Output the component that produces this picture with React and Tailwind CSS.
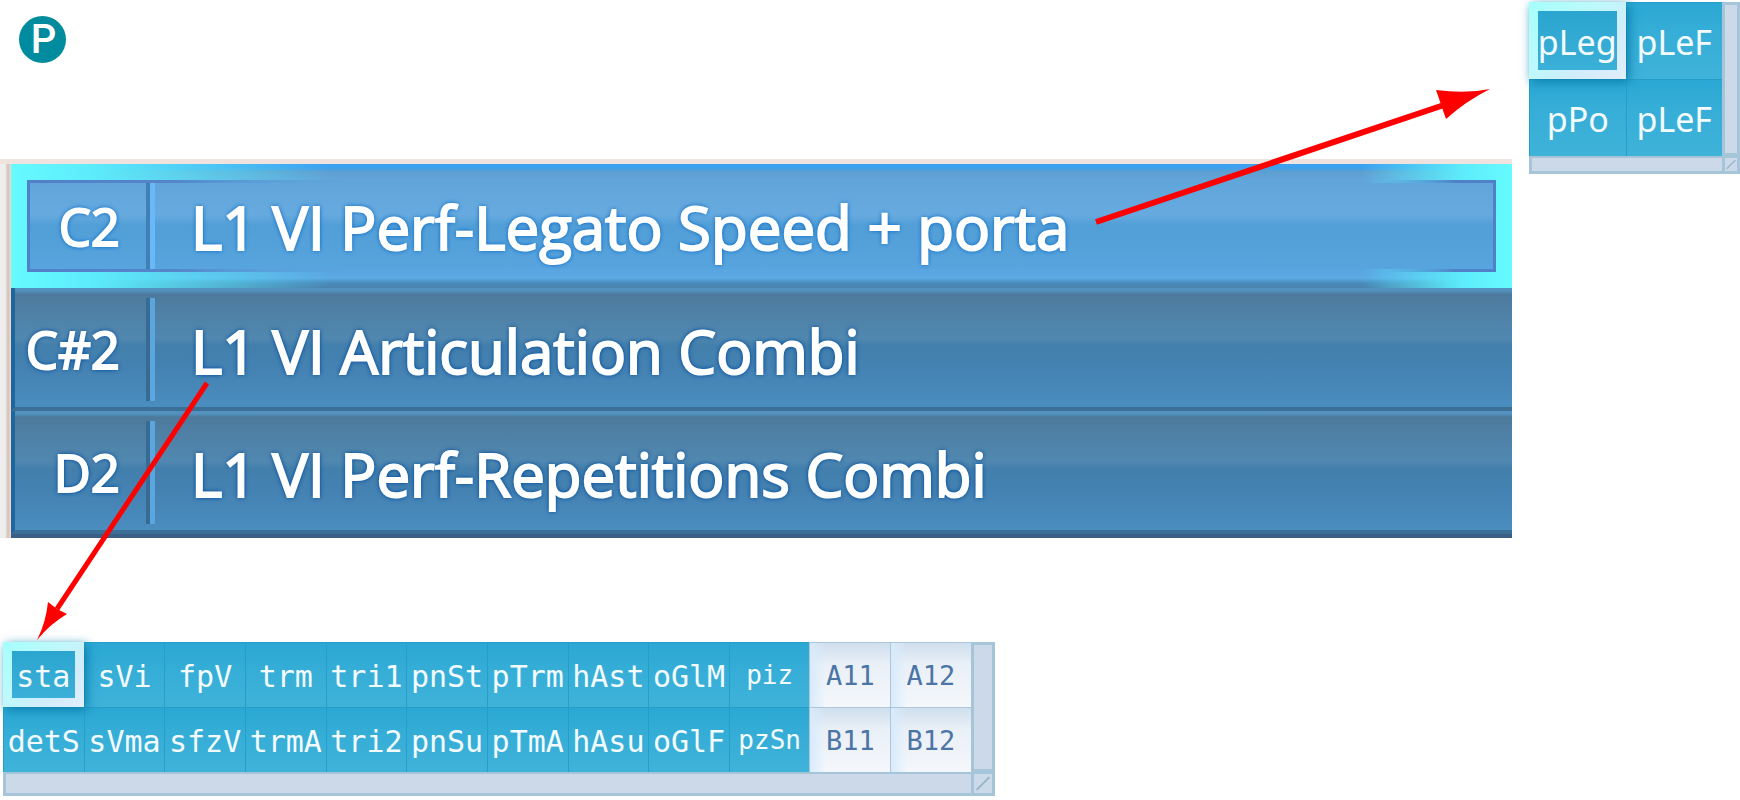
import React from 'react';
import clsx from 'clsx';

const patches = [
  { key: 'C2', name: 'L1 VI Perf-Legato Speed + porta', selected: true },
  { key: 'C#2', name: 'L1 VI Articulation Combi' },
  { key: 'D2', name: 'L1 VI Perf-Repetitions Combi' },
];

const legatoCells = [
  { label: 'pLeg', selected: true },
  { label: 'pLeF' },
  { label: 'pPo' },
  { label: 'pLeF' },
];

const combiCells = [
  { label: 'sta', selected: true },
  { label: 'sVi' },
  { label: 'fpV' },
  { label: 'trm' },
  { label: 'tri1' },
  { label: 'pnSt' },
  { label: 'pTrm' },
  { label: 'hAst' },
  { label: 'oGlM' },
  { label: 'piz', small: true },
  { label: 'A11', empty: true },
  { label: 'A12', empty: true },
  { label: 'detS' },
  { label: 'sVma' },
  { label: 'sfzV' },
  { label: 'trmA' },
  { label: 'tri2' },
  { label: 'pnSu' },
  { label: 'pTmA' },
  { label: 'hAsu' },
  { label: 'oGlF' },
  { label: 'pzSn', small: true },
  { label: 'B11', empty: true },
  { label: 'B12', empty: true },
];

const Logo = () => (
  <div className="flex size-[47px] items-center justify-center rounded-full bg-[#008c9e] pl-0.5 font-['Roboto',sans-serif] text-[40px] leading-none font-medium text-white">
    P
  </div>
);

const PatchRow = ({ patch }) => (
  <button
    type="button"
    className={clsx(
      'block w-full text-left text-white [-webkit-text-stroke:2px_#fff]',
      patch.selected
        ? 'bg-[linear-gradient(90deg,#66fbff_0,#5cecfb_80px,#5cecfb00_320px,#5cecfb00_calc(100%-150px),#5cecfb_calc(100%-50px),#66fbff_100%),linear-gradient(180deg,#3aa2f2_0,#3fa0ec_4px,#5f9fd0_8px,#62a5da_16px,#5aa6e2_110px,#5caae4_114px,#4a8cbc_119px,#4a82ac_124px)] p-4 [text-shadow:0_0_5px_#0d68c4,0_0_4px_#1476cc]'
        : 'border-l-4 border-l-[#1d669e] border-b-4 border-b-[#3c6f96] bg-[linear-gradient(180deg,#5592c0_0,#5190bd_3px,#4c7a9c_6px,#4f80a6_24px,#5088b0_50px,#427fac_58px,#4482b2_80px,#4a8dbf_100%)] pt-2.5 pr-4 pb-1.5 pl-3 [text-shadow:0_0_5px_#00489c,0_0_4px_#00539f]'
    )}
  >
    <span
      className={clsx(
        'block',
        patch.selected &&
          'bg-[linear-gradient(90deg,#5180c8_0,#5585cb_150px,#5585cb00_320px,#5585cb00_calc(100%-110px),#4f80c8_calc(100%-40px))] p-[3px]'
      )}
    >
      <span
        className={clsx(
          'flex items-stretch',
          patch.selected
            ? 'h-[86px] bg-[linear-gradient(180deg,#61a6da_0,#66aadf_32px,#529fd7_42px,#57a4de_100%)]'
            : 'h-[103px]'
        )}
      >
        <span
          className={clsx(
            'flex shrink-0 items-center justify-end border-r-4 pr-[26px] text-[51px] leading-none',
            patch.selected ? 'w-[120px] border-r-[#4180b4]' : 'w-[123px] border-r-[#386b94]'
          )}
        >
          {patch.key}
        </span>
        <span
          className={clsx(
            'flex grow items-center border-l-5 pt-0.5 pl-9 text-[60px] leading-none whitespace-nowrap',
            patch.selected ? 'border-l-[#68b8fa]' : 'border-l-[#5ba6de]'
          )}
        >
          {patch.name}
        </span>
      </span>
    </span>
  </button>
);

const Cell = ({ cell, textClass }) => {
  if (cell.selected) {
    return (
      <button
        type="button"
        className="z-10 min-w-0 bg-[linear-gradient(135deg,#a4fffb_0%,#bdf9fc_40%,#d2ecfb_70%,#e2eefc_100%)] p-[9px] shadow-[3px_3px_10px_#0a7fae]"
      >
        <span
          className={clsx(
            'flex h-full items-center justify-center overflow-hidden bg-[linear-gradient(180deg,#2ba5cf,#3bb0d8)] whitespace-nowrap text-[#f3fbff]',
            textClass
          )}
        >
          {cell.label}
        </span>
      </button>
    );
  }
  return (
    <button
      type="button"
      className={clsx(
        'flex min-w-0 items-center justify-center border-t border-l whitespace-nowrap',
        cell.empty
          ? 'border-[#aec5da] bg-[linear-gradient(90deg,#d8ebfb_0,#d8ebfb00_16px),linear-gradient(180deg,#cfdfee_0,#eaf0f7_22px,#f4f7fb_100%)] text-[27px] text-[#4c75a6]'
          : 'border-[#259fc9] bg-[linear-gradient(180deg,#2ba8d4_0,#36aed7_30px,#3fb2d9_100%)] text-[#f3fbff]',
        !cell.empty && !cell.small && textClass,
        cell.small && 'text-[26px]'
      )}
    >
      {cell.label}
    </button>
  );
};

// Cell matrix with the scroll tracks on its right and bottom sides
const Matrix = ({ cells, className, tracks, size, textClass }) => (
  <div className={clsx('grid', className, tracks)}>
    <div className={clsx('grid', size)}>
      {cells.map((cell, index) => (
        <Cell key={index} cell={cell} textClass={textClass} />
      ))}
    </div>
    <div className="border-3 border-[#a6c5d8] bg-[#cbd9e9]" />
    <div className="border-3 border-t-2 border-r-0 border-[#a6c5d8] bg-[#cbd9e9]" />
    <div className="flex items-center justify-center border-3 border-t-2 border-[#a6c5d8] bg-[#cbd9e9]">
      <svg viewBox="0 0 14 14" className="size-full" fill="none" stroke="#96b6ca" strokeWidth="1.5">
        <path d="M2 12 12 2" />
      </svg>
    </div>
  </div>
);

const Arrows = () => (
  <>
    <svg
      className="pointer-events-none absolute top-20 right-[240px] z-20 h-[150px] w-[420px]"
      viewBox="1080 80 420 150"
      aria-hidden="true"
    >
      <path d="M1096 222 1444 105" stroke="#f00" strokeWidth="6" />
      <path d="M1490 89Q1466 94 1436 90L1446 119Q1466 101 1490 89Z" fill="#f00" />
    </svg>
    <svg
      className="pointer-events-none absolute top-[370px] left-0 z-20 h-[280px] w-[230px]"
      viewBox="0 370 230 280"
      aria-hidden="true"
    >
      <path d="M207 383 57 609" stroke="#f00" strokeWidth="5" />
      <path d="M37 640Q46 622 48 602L57 609 67 614Q50 624 37 640Z" fill="#f00" />
    </svg>
  </>
);

const App = () => (
  <main className="relative min-h-screen bg-white font-['Noto_Sans',sans-serif]">
    <div className="flex items-start gap-[17px]">
      <div className="min-w-0 grow">
        <header className="pt-4 pb-24 pl-[19px]">
          <Logo />
        </header>
        <section className="overflow-hidden border-t-5 border-t-[#f0e2de] bg-[linear-gradient(90deg,#eeeeee_0,#eeeeee_5px,#d2c0ba_8px,#f0dcd0_11px)] pl-[11px] font-['Open_Sans','Noto_Sans',sans-serif]">
          {patches.map((patch) => (
            <PatchRow key={patch.key} patch={patch} />
          ))}
          <div className="h-1 bg-[#3a5f87]" />
        </section>
      </div>
      <Matrix
        cells={legatoCells}
        className="mt-0.5 w-[211px] shrink-0 text-[34px] leading-none"
        tracks="grid-cols-[1fr_18px] grid-rows-[auto_18px]"
        size="auto-rows-[77px] grid-cols-2"
        textClass="pt-0.5"
      />
    </div>
    <Matrix
      cells={combiCells}
      className="mt-[104px] ml-[3px] w-[57%] font-['DejaVu_Sans_Mono',monospace] text-[30px] leading-none"
      tracks="grid-cols-[1fr_24px] grid-rows-[auto_24px]"
      size="auto-rows-[65px] grid-cols-12"
      textClass="pt-1"
    />
    <Arrows />
  </main>
);

export default App;
